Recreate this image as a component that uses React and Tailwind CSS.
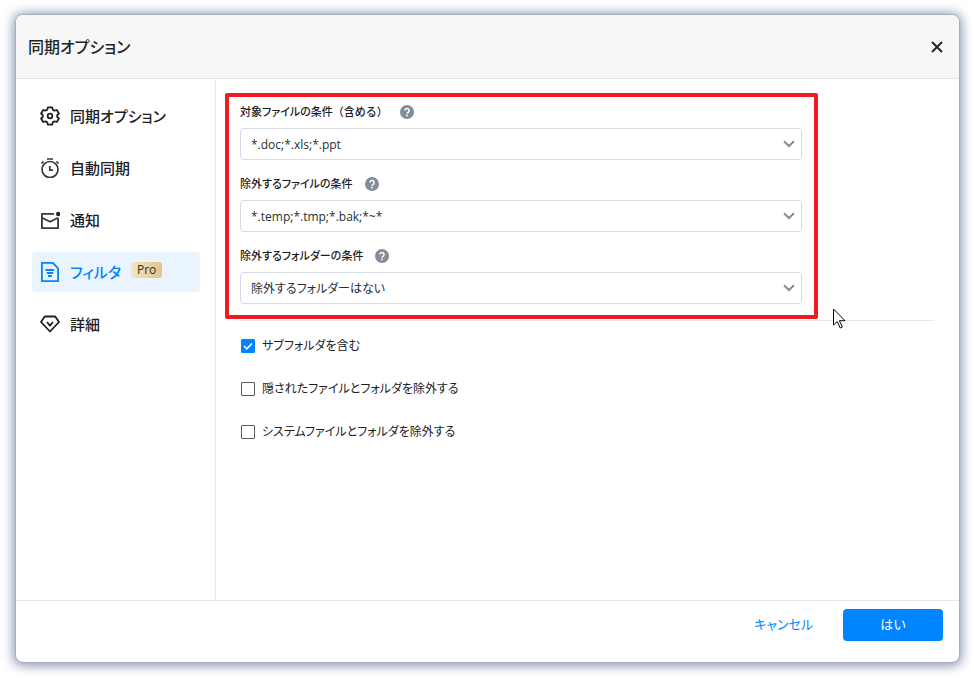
import { useState } from "react";

const iconProps = {
  width: 20,
  height: 20,
  viewBox: "0 0 20 20",
  fill: "none",
  stroke: "currentColor",
  "aria-hidden": true,
};

function GearIcon() {
  return (
    <svg {...iconProps} strokeWidth="1.8" strokeLinejoin="round">
      <path d="M7.900 1.300h4.200l.7 2.400 1.600.9 2.400-.6 2.100 3.500-1.700 1.700v1.600l1.700 1.700-2.100 3.500-2.400-.6-1.600.9-.7 2.400H7.900l-.7-2.400-1.600-.9-2.400.6-2.100-3.500 1.700-1.700V9.200L1.100 7.500 3.200 4l2.400.6 1.600-.9z" />
      <circle cx="10" cy="10" r="2.300" />
    </svg>
  );
}

function TimerIcon() {
  return (
    <svg {...iconProps} strokeWidth="1.7" className="text-[#34393e]">
      <circle cx="10" cy="11.500" r="8" />
      <path d="M7 1h6M1.500 5.500l2-2M18.500 5.500l-2-2M9.800 8v4.200h3.200" />
    </svg>
  );
}

function MailIcon() {
  return (
    <svg {...iconProps} strokeWidth="1.8" strokeLinejoin="round" className="text-[#34393e]">
      <path d="M14 3.800H1.900v14.400h16.200V8" />
      <path d="M2 7.800l8 4L18 7.800" />
      <circle cx="18.200" cy="4" r="2.200" fill="#1c2023" stroke="none" />
    </svg>
  );
}

function FilterIcon() {
  return (
    <svg {...iconProps} strokeWidth="1.800" strokeLinejoin="round">
      <path d="M1.900.9h11l5.200 5.400v12.800H1.900z" />
      <path d="M5.500 8h8.500M6.800 11h6.400M8 14h3.800" />
    </svg>
  );
}

function DiamondIcon() {
  return (
    <svg {...iconProps} strokeWidth="1.800" strokeLinejoin="round">
      <path d="M4.800 2.500h10.400L19 8l-9 9.500L1 8z" />
      <path d="M7 8l3 3.600L13 8" />
    </svg>
  );
}

const menu = [
  { id: "sync", label: "同期オプション", icon: GearIcon },
  { id: "auto", label: "自動同期", icon: TimerIcon },
  { id: "notice", label: "通知", icon: MailIcon },
  { id: "filter", label: "フィルタ", icon: FilterIcon, pro: true },
  { id: "detail", label: "詳細", icon: DiamondIcon },
];

const filters = [
  { id: "include", label: "対象ファイルの条件", note: "（含める）", value: "*.doc;*.xls;*.ppt" },
  { id: "exclude-file", label: "除外するファイルの条件", value: "*.temp;*.tmp;*.bak;*~*" },
  { id: "exclude-folder", label: "除外するフォルダーの条件", value: "除外するフォルダーはない" },
];

const options = [
  { id: "subfolder", label: "サブフォルダを含む", checked: true },
  { id: "hidden", label: "隠されたファイルとフォルダを除外する", checked: false },
  { id: "system", label: "システムファイルとフォルダを除外する", checked: false },
];

function MenuItem({ item, active, onClick }) {
  const Icon = item.icon;
  return (
    <button
      onClick={onClick}
      className={`flex h-10 w-full items-center gap-[10px] rounded-sm px-2 text-[15px] font-medium ${active ? "bg-[#e9f4ff] text-[#0084ff]" : "text-[#1c2023]"}`}
    >
      <Icon />
      <span>{item.label}</span>
      {item.pro && (
        <span className="mb-1 flex h-4 items-center rounded-[3px] bg-linear-to-r from-[#f3e6c4] to-[#e0c68c] px-[6px] text-xs text-[#2b2b2b]">
          Pro
        </span>
      )}
    </button>
  );
}

function FilterField({ id, label, note, value }) {
  return (
    <div className="flex flex-col gap-[6px]">
      <div className="flex h-5 items-center gap-3">
        <label htmlFor={id} className="text-[11px] font-medium text-[#1c2023]">
          {label}
          {note && <span className="[font-feature-settings:normal]">{note}</span>}
        </label>
        <button aria-label="ヘルプ">
          <svg width="14" height="14" viewBox="0 0 14 14" fill="none" aria-hidden="true">
            <circle cx="7" cy="7" r="7" fill="#858c99" />
            <path d="M4.900 5.600a2.100 2.100 0 1 1 3.300 1.700C7.400 7.800 7 8 7 8.800" stroke="#fff" strokeWidth="1.500" />
            <circle cx="7" cy="10.500" r=".9" fill="#fff" />
          </svg>
        </button>
      </div>
      <div className="relative">
        <select
          id={id}
          className="block h-8 w-full appearance-none rounded border border-[#d5d9e2] bg-white px-[10px] pt-0.5 text-xs text-[#2a2e33]"
        >
          <option>{value}</option>
        </select>
        <svg className="pointer-events-none absolute top-3 right-[7px]" width="12" height="8" viewBox="0 0 12 8" fill="none" aria-hidden="true">
          <path d="M1 1.200l5 4.800 5-4.800" stroke="#858c99" strokeWidth="2" />
        </svg>
      </div>
    </div>
  );
}

function CheckOption({ id, label, checked }) {
  return (
    <div className="flex h-5 items-center gap-[7px]">
      <span className="relative">
        <input
          id={id}
          type="checkbox"
          defaultChecked={checked}
          className="peer block size-[14px] appearance-none rounded-[1px] border border-[#565c66] bg-white checked:border-[#0084ff] checked:bg-[#0084ff]"
        />
        <svg className="pointer-events-none absolute inset-0 hidden peer-checked:block" width="14" height="14" viewBox="0 0 14 14" fill="none" aria-hidden="true">
          <path d="M3 7l2.800 2.800L11 4.500" stroke="#fff" strokeWidth="1.600" />
        </svg>
      </span>
      <label htmlFor={id} className="text-xs text-[#1c2023]">
        {label}
      </label>
    </div>
  );
}

function App() {
  const [active, setActive] = useState("filter");

  return (
    <div className="flex min-h-screen bg-white pt-[14px] pr-[14px] pb-[15px] pl-[15px] font-['Open_Sans','Noto_Sans_CJK_JP',sans-serif] [font-feature-settings:'palt']">
      <div
        role="dialog"
        aria-labelledby="dialog-title"
        className="flex flex-1 flex-col overflow-hidden rounded-lg border border-[#a5adbf] bg-white shadow-[0_1px_11px_2px_#8d98b3]"
      >
        <header className="flex h-16 items-center justify-between border-b border-[#e3e4e6] bg-[#f7f7f7] pr-4 pl-3">
          <h1 id="dialog-title" className="text-base font-medium text-[#22262a]">
            同期オプション
          </h1>
          <button aria-label="閉じる" className="text-[#22262a]">
            <svg width="12" height="12" viewBox="0 0 12 12" fill="none" stroke="currentColor" strokeWidth="2" aria-hidden="true">
              <path d="M1 1l10 10M11 1L1 11" />
            </svg>
          </button>
        </header>

        <div className="flex flex-1">
          <nav className="flex w-[200px] shrink-0 flex-col gap-3 border-r border-[#e8e9eb] pt-[17px] pr-[15px] pl-4">
            {menu.map((item) => (
              <MenuItem key={item.id} item={item} active={active === item.id} onClick={() => setActive(item.id)} />
            ))}
          </nav>

          <main className="flex-1 pt-[14px] pr-[25px] pl-[9px]">
            <section className="mr-[116px] flex flex-col gap-[14px] rounded-[2px] border-4 border-[#ed1c24] pt-[5px] pr-3 pb-[11px] pl-[11px]">
              {filters.map((f) => (
                <FilterField key={f.id} {...f} />
              ))}
            </section>

            <div className="relative mt-px ml-[15px] border-t border-[#e8e9eb]">
              {/* mouse pointer resting over the divider */}
              <svg className="absolute -top-[13px] right-[88px]" width="13" height="21" viewBox="0 0 13 21" aria-hidden="true">
                <path
                  d="M.5 1v16l3.700-3.500 3 6.500 2.200-1-3-6.300H12z"
                  fill="#fff"
                  stroke="#000"
                />
              </svg>
            </div>

            <div className="mt-[15px] ml-4 flex flex-col gap-[23px]">
              {options.map((o) => (
                <CheckOption key={o.id} {...o} />
              ))}
            </div>
          </main>
        </div>

        <footer className="flex justify-end gap-[30px] border-t border-[#e8e9eb] pt-2 pr-4 pb-[21px]">
          <button className="text-[13px] text-[#0084ff]">キャンセル</button>
          <button className="h-8 w-[100px] rounded bg-[#0084ff] text-[13px] text-white">はい</button>
        </footer>
      </div>
    </div>
  );
}

export default App;
